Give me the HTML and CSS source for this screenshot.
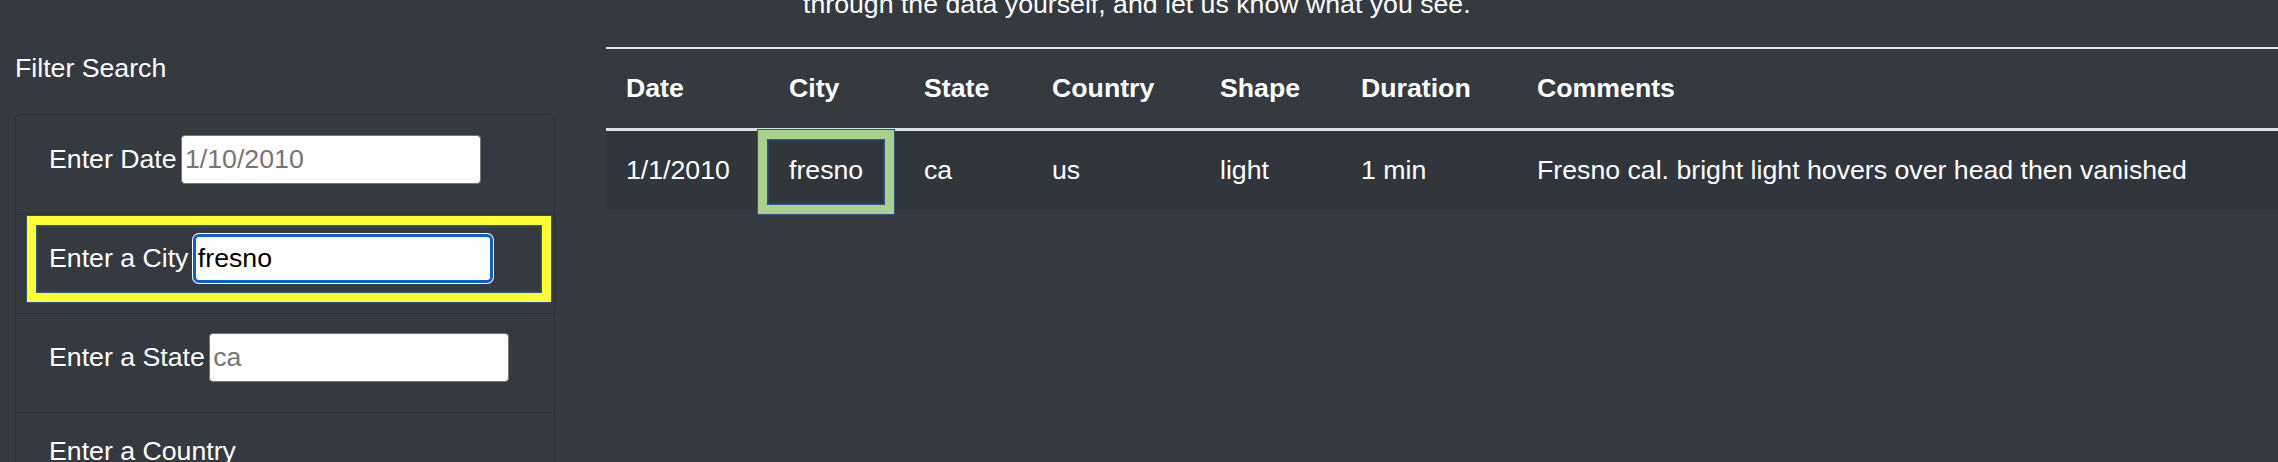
FILE: index.html
```html
<!DOCTYPE html>
<html lang="en">
<head>
<meta charset="utf-8">
<title>UFO Sightings</title>
<link rel="stylesheet" href="styles.css">
</head>
<body>
<div class="page">
  <aside class="sidebar">
    <h5 class="filter-title">Filter Search</h5>
    <ul class="filter-list">
      <li class="filter-item">
        <label for="datetime">Enter Date</label> <input class="filter-input" id="datetime" type="text" placeholder="1/10/2010">
      </li>
      <li class="filter-item highlight">
        <label for="city">Enter a City</label> <input class="filter-input focused" id="city" type="text" value="fresno">
      </li>
      <li class="filter-item">
        <label for="state">Enter a State</label> <input class="filter-input" id="state" type="text" placeholder="ca">
      </li>
      <li class="filter-item">
        <label for="country">Enter a Country</label> <input class="filter-input" id="country" type="text" placeholder="us">
      </li>
    </ul>
  </aside>
  <main class="content">
    <p class="intro">through the data yourself, and let us know what you see.</p>
    <table class="ufo-table">
      <colgroup>
        <col class="c-date"><col class="c-city"><col class="c-state"><col class="c-country"><col class="c-shape"><col class="c-duration"><col>
      </colgroup>
      <thead>
        <tr>
          <th>Date</th><th>City</th><th>State</th><th>Country</th><th>Shape</th><th>Duration</th><th>Comments</th>
        </tr>
      </thead>
      <tbody>
        <tr>
          <td>1/1/2010</td><td class="marked">fresno</td><td>ca</td><td>us</td><td>light</td><td>1 min</td><td>Fresno cal. bright light hovers over head then vanished</td>
        </tr>
      </tbody>
    </table>
  </main>
</div>
</body>
</html>
```
FILE: styles.css
```css
html, body {
  margin: 0;
  padding: 0;
}
body {
  width: 2278px;
  height: 462px;
  overflow: hidden;
  background: #343a40;
  color: #ffffff;
  font-family: "Liberation Sans", Arial, sans-serif;
  font-size: 26.7px;
  line-height: 39px;
}
.page {
  display: flex;
  gap: 51px;
  align-items: flex-start;
}
.sidebar {
  flex: 0 0 555px;
  box-sizing: border-box;
  padding: 49px 0 0 15px;
}
.filter-title {
  margin: 0 0 26px;
  font-size: 26.7px;
  font-weight: 400;
  line-height: 39px;
}
.filter-list {
  list-style: none;
  margin: 0;
  padding: 0;
  border: 1.5px solid rgba(0, 0, 0, 0.16);
  border-radius: 6px;
}
.filter-item {
  position: relative;
  padding: 19px 33px 30px;
  border-top: 1.5px solid rgba(0, 0, 0, 0.16);
}
.filter-item:first-child {
  border-top: 0;
  padding-top: 20px;
}
.filter-input {
  box-sizing: border-box;
  width: 300px;
  height: 49px;
  margin-left: -3px;
  padding: 1px 3px;
  font-family: inherit;
  font-size: 26.7px;
  color: #000;
  background: #fff;
  border: 1.5px solid #767676;
  border-radius: 4px;
  vertical-align: baseline;
}
.filter-input::placeholder {
  color: #757575;
}
.filter-input.focused {
  border: 3px solid #0b5fd0;
  border-radius: 6px;
  padding: 0 2px;
  box-shadow: 0 0 0 1px #ffffff;
  outline: none;
}
.highlight::after {
  content: "";
  position: absolute;
  top: 0;
  left: 10px;
  right: 2px;
  bottom: 10px;
  border: 1.5px solid #2f528f;
  box-shadow: inset 0 0 0 9px #ffff33, inset 0 0 0 10.5px #2f528f;
  pointer-events: none;
}
.content {
  flex: 1 1 auto;
  min-width: 0;
}
.intro {
  margin: -15px 0 23px;
  padding-left: 197px;
  line-height: 39px;
  white-space: nowrap;
}
.ufo-table {
  width: 100%;
  border-collapse: collapse;
  table-layout: fixed;
}
.c-date { width: 163px; }
.c-city { width: 135px; }
.c-state { width: 128px; }
.c-country { width: 168px; }
.c-shape { width: 141px; }
.c-duration { width: 176px; }
.ufo-table th,
.ufo-table td {
  padding: 21px 20px;
  line-height: 37px;
  text-align: left;
  white-space: nowrap;
}
.ufo-table th {
  font-weight: 700;
  border-top: 2px solid #dee2e6;
  border-bottom: 3px solid #dee2e6;
}
.ufo-table tbody tr {
  background: rgba(0, 0, 0, 0.06);
}
.ufo-table td.marked {
  position: relative;
}
.ufo-table td.marked::after {
  content: "";
  position: absolute;
  top: -2px;
  left: -12px;
  width: 138px;
  bottom: -5px;
  border: 1.5px solid #2f528f;
  box-sizing: border-box;
  box-shadow: inset 0 0 0 9px #a9d18e, inset 0 0 0 10.5px #2f528f;
  pointer-events: none;
}
```
